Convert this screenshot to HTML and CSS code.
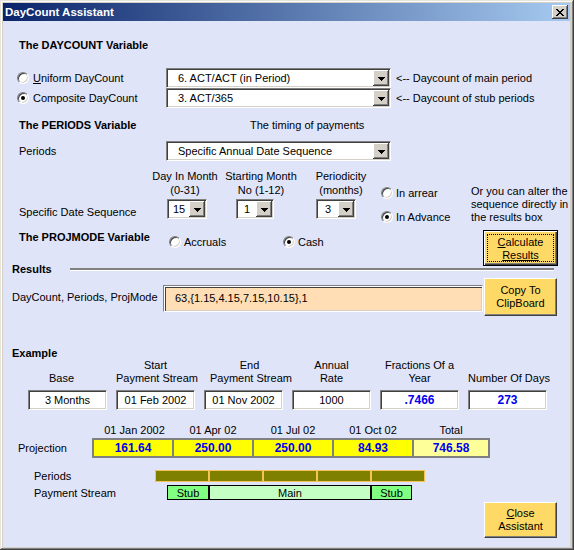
FILE: index.html
```html
<!DOCTYPE html>
<html>
<head>
<meta charset="utf-8">
<title>DayCount Assistant</title>
<link rel="stylesheet" href="styles.css">
</head>
<body>
<div class="window">
  <div class="titlebar">
    <span class="title">DayCount Assistant</span>
    <span class="close-btn"><svg width="8" height="7" viewBox="0 0 8 7" shape-rendering="crispEdges"><path d="M0 0h2v1h1v1h2v-1h1v-1h2v1h-1v1h-1v1h-1v1h1v1h1v1h1v1h-2v-1h-1v-1h-2v1h-1v1h-2v-1h1v-1h1v-1h1v-1h-1v-1h-1v-1h-1z"/></svg></span>
  </div>
  <div class="client">
    <div class="row r-h1"><span class="heading">The DAYCOUNT Variable</span></div>

    <div class="row r-dc1">
      <div class="opt opt-dc"><span class="radio"></span><span><u>U</u>niform DayCount</span></div>
      <div class="combo combo-wide"><span class="combo-text">6. ACT/ACT (in Period)</span><span class="drop"><svg width="7" height="4" viewBox="0 0 7 4" shape-rendering="crispEdges"><path d="M0 0H7V1H6V2H5V3H4V4H3V3H2V2H1V1H0Z"/></svg></span></div>
      <span class="note">&lt;-- Daycount of main period</span>
    </div>

    <div class="row r-dc2">
      <div class="opt opt-dc"><span class="radio on"></span><span>Composite DayCount</span></div>
      <div class="combo combo-wide"><span class="combo-text">3. ACT/365</span><span class="drop"><svg width="7" height="4" viewBox="0 0 7 4" shape-rendering="crispEdges"><path d="M0 0H7V1H6V2H5V3H4V4H3V3H2V2H1V1H0Z"/></svg></span></div>
      <span class="note">&lt;-- Daycount of stub periods</span>
    </div>

    <div class="row r-h2">
      <span class="heading heading-per">The PERIODS Variable</span>
      <span>The timing of payments</span>
    </div>

    <div class="row r-per">
      <span class="lbl-per">Periods</span>
      <div class="combo combo-wide"><span class="combo-text">Specific Annual Date Sequence</span><span class="drop"><svg width="7" height="4" viewBox="0 0 7 4" shape-rendering="crispEdges"><path d="M0 0H7V1H6V2H5V3H4V4H3V3H2V2H1V1H0Z"/></svg></span></div>
    </div>

    <div class="row r-seq">
      <span class="seq-label">Specific Date Sequence</span>
      <div class="param param-day">
        <span class="param-head">Day In Month<br>(0-31)</span>
        <div class="combo combo-small"><span class="combo-text combo-center">15</span><span class="drop"><svg width="7" height="4" viewBox="0 0 7 4" shape-rendering="crispEdges"><path d="M0 0H7V1H6V2H5V3H4V4H3V3H2V2H1V1H0Z"/></svg></span></div>
      </div>
      <div class="param param-month">
        <span class="param-head">Starting Month<br>No (1-12)</span>
        <div class="combo combo-small combo-narrow"><span class="combo-text combo-center">1</span><span class="drop"><svg width="7" height="4" viewBox="0 0 7 4" shape-rendering="crispEdges"><path d="M0 0H7V1H6V2H5V3H4V4H3V3H2V2H1V1H0Z"/></svg></span></div>
      </div>
      <div class="param param-freq">
        <span class="param-head">Periodicity<br>(months)</span>
        <div class="combo combo-small"><span class="combo-text combo-center">3</span><span class="drop"><svg width="7" height="4" viewBox="0 0 7 4" shape-rendering="crispEdges"><path d="M0 0H7V1H6V2H5V3H4V4H3V3H2V2H1V1H0Z"/></svg></span></div>
      </div>
      <div class="timing">
        <div class="opt"><span class="radio"></span><span>In arrear</span></div>
        <div class="opt"><span class="radio on"></span><span>In Advance</span></div>
      </div>
      <div class="hint">Or you can alter the<br>sequence directly in<br>the results box</div>
    </div>

    <div class="row r-proj">
      <span class="heading heading-proj">The PROJMODE Variable</span>
      <div class="opt opt-acc"><span class="radio"></span><span>Accruals</span></div>
      <div class="opt opt-cash"><span class="radio on"></span><span>Cash</span></div>
      <div class="btn btn-default btn-calc"><span class="focus"><span><u>C</u>alculate<br><u>Results</u></span></span></div>
    </div>

    <div class="row r-res">
      <span class="heading heading-res">Results</span>
      <span class="sep"></span>
    </div>

    <div class="row r-resbox">
      <span class="lbl-res">DayCount, Periods, ProjMode</span>
      <div class="result-box">63,{1.15,4.15,7.15,10.15},1</div>
      <div class="btn btn-copy"><span>Copy To<br>ClipBoard</span></div>
    </div>

    <div class="row r-ex"><span class="heading">Example</span></div>

    <div class="row r-exl">
      <span class="exl exl-base">Base</span>
      <span class="exl">Start<br>Payment Stream</span>
      <span class="exl exl-end">End<br>Payment Stream</span>
      <span class="exl">Annual<br>Rate</span>
      <span class="exl">Fractions Of a<br>Year</span>
      <span class="exl">Number Of Days</span>
    </div>

    <div class="row r-exb">
      <span class="field">3 Months</span>
      <span class="field">01 Feb 2002</span>
      <span class="field">01 Nov 2002</span>
      <span class="field">1000</span>
      <span class="field field-calc">.7466</span>
      <span class="field field-calc">273</span>
    </div>

    <div class="row r-dates">
      <span class="dcell dcell-first">01 Jan 2002</span>
      <span class="dcell">01 Apr 02</span>
      <span class="dcell">01 Jul 02</span>
      <span class="dcell">01 Oct 02</span>
      <span class="dcell dcell-total">Total</span>
    </div>

    <div class="row r-proj2">
      <span class="lbl-proj">Projection</span>
      <span class="pcell">161.64</span>
      <span class="pcell">250.00</span>
      <span class="pcell">250.00</span>
      <span class="pcell">84.93</span>
      <span class="pcell pcell-total">746.58</span>
    </div>

    <div class="row r-pbar">
      <span class="lbl-pbar">Periods</span>
      <span class="pseg"></span>
      <span class="pseg"></span>
      <span class="pseg"></span>
      <span class="pseg"></span>
      <span class="pseg"></span>
    </div>

    <div class="row r-stream">
      <span class="lbl-stream">Payment Stream</span>
      <span class="sseg sseg-stub1">Stub</span>
      <span class="sseg sseg-main">Main</span>
      <span class="sseg sseg-stub2">Stub</span>
    </div>

    <div class="row r-close">
      <div class="btn btn-close"><span><u>C</u>lose<br>Assistant</span></div>
    </div>
  </div>
</div>
</body>
</html>
```

FILE: styles.css
```css
html, body {
  margin: 0;
  padding: 0;
}

body {
  font-family: "Liberation Sans", Arial, sans-serif;
  font-size: 11px;
  color: #000;
  background: #fff;
}

.window {
  width: 574px;
  height: 550px;
  box-sizing: border-box;
  padding: 3px 4px 3px 3px;
  background: #D4D0C8;
  box-shadow: inset -1px -1px 0 #404040, inset 1px 1px 0 #E8E4DC, inset -2px -2px 0 #808080, inset 2px 2px 0 #fff;
  display: flex;
  flex-direction: column;
}

.titlebar {
  height: 18px;
  flex: none;
  display: flex;
  align-items: center;
  justify-content: space-between;
  padding: 0 2px;
  background: linear-gradient(to right, #0A246A, #A6CAF0);
}

.title {
  color: #fff;
  font-weight: bold;
  font-size: 11.5px;
}

.close-btn {
  width: 16px;
  height: 14px;
  box-sizing: border-box;
  background: #D4D0C8;
  box-shadow: inset -1px -1px 0 #404040, inset 1px 1px 0 #fff, inset -2px -2px 0 #808080;
  display: flex;
  align-items: center;
  justify-content: center;
}

.client {
  flex: 1;
  background: #DFE4F9;
  display: flex;
  flex-direction: column;
}

.row {
  display: flex;
  align-items: center;
  flex: none;
  box-sizing: border-box;
}

.heading {
  font-weight: bold;
  white-space: nowrap;
}

/* generic option (radio + label) */
.opt {
  display: flex;
  align-items: center;
  gap: 4px;
  flex: none;
  white-space: nowrap;
  height: 14px;
}

.radio {
  width: 12px;
  height: 12px;
  box-sizing: border-box;
  border-radius: 50%;
  background: #fff;
  border: 1px solid;
  border-color: #808080 #fff #fff #808080;
  box-shadow: inset 1px 1px 0 #404040, inset -1px -1px 0 #D4D0C8;
  display: flex;
  align-items: center;
  justify-content: center;
  flex: none;
}

.radio.on::after {
  content: "";
  width: 4px;
  height: 4px;
  border-radius: 50%;
  background: #000;
}

/* combo boxes */
.combo {
  display: flex;
  height: 20px;
  box-sizing: border-box;
  background: #fff;
  border: 1px solid;
  border-color: #808080 #fff #fff #808080;
  box-shadow: inset 1px 1px 0 #404040, inset -1px -1px 0 #D4D0C8;
  padding: 1px;
  flex: none;
}

.combo-wide {
  width: 225px;
}

.combo-small {
  width: 40px;
}

.combo-narrow {
  width: 38px;
}

.combo-text {
  flex: 1;
  line-height: 16px;
  padding-left: 10px;
  white-space: nowrap;
  overflow: hidden;
}

.combo-center {
  padding-left: 0;
  text-align: center;
}

.drop {
  width: 16px;
  height: 16px;
  box-sizing: border-box;
  background: #D4D0C8;
  box-shadow: inset -1px -1px 0 #404040, inset 1px 1px 0 #fff, inset -2px -2px 0 #808080;
  display: flex;
  align-items: center;
  justify-content: center;
  flex: none;
}

.drop svg {
  margin-top: 1px;
}

/* rows */
.r-h1 {
  margin-top: 17px;
  height: 14px;
  padding-left: 16px;
}

.r-dc1 {
  margin-top: 16px;
  height: 20px;
  padding-left: 14px;
}

.r-dc2 {
  height: 20px;
  padding-left: 14px;
}

.opt-dc {
  width: 149px;
}

.note {
  margin-left: 5px;
  white-space: nowrap;
}

.r-h2 {
  margin-top: 10px;
  height: 14px;
  padding-left: 16px;
}

.heading-per {
  width: 231px;
}

.r-per {
  margin-top: 9px;
  height: 20px;
  padding-left: 16px;
}

.lbl-per {
  width: 147px;
  flex: none;
}

.r-seq {
  margin-top: 8px;
  height: 56px;
  padding-left: 16px;
  align-items: stretch;
}

.seq-label {
  width: 129px;
  flex: none;
  align-self: flex-end;
  line-height: 14px;
  margin-bottom: 6px;
  white-space: nowrap;
}

.param {
  display: flex;
  flex-direction: column;
  align-items: flex-start;
  flex: none;
}

.param-head {
  width: 100%;
  text-align: center;
  line-height: 14px;
  white-space: nowrap;
}

.param .combo {
  margin-top: 2px;
}

.param-day {
  width: 74px;
}

.param-day .combo {
  margin-left: 19px;
}

.param-month {
  width: 78px;
}

.param-month .combo {
  margin-left: 14px;
}

.param-freq {
  width: 82px;
}

.param-freq .combo {
  margin-left: 16px;
}

.timing {
  width: 89px;
  flex: none;
  display: flex;
  flex-direction: column;
  gap: 10px;
  padding-top: 17px;
}

.timing .opt {
  gap: 3px;
  margin-left: -1px;
}

.hint {
  padding-top: 16px;
  line-height: 13px;
  white-space: nowrap;
}

.r-proj {
  margin-top: 5px;
  height: 36px;
  padding-left: 16px;
  align-items: flex-start;
}

.heading-proj {
  width: 150px;
  line-height: 14px;
  flex: none;
}

.opt-acc {
  width: 114px;
  margin-top: 5px;
  gap: 3px;
}

.opt-cash {
  width: 200px;
  margin-top: 5px;
  gap: 3px;
}

/* buttons */
.btn {
  background: #FFD966;
  box-sizing: border-box;
  display: flex;
  align-items: center;
  justify-content: center;
  text-align: center;
  line-height: 13px;
  flex: none;
  border: 1px solid;
  border-color: #fff #404040 #404040 #fff;
  box-shadow: inset -1px -1px 0 #808080;
}

.btn-default {
  border: 1px solid #000;
  box-shadow: inset 1px 1px 0 #fff, inset -1px -1px 0 #404040, inset -2px -2px 0 #808080;
  padding: 3px;
  align-items: stretch;
}

.btn-calc {
  width: 75px;
  height: 36px;
}

.focus {
  flex: 1;
  border: 1px dotted #000;
  display: flex;
  align-items: center;
  justify-content: center;
  padding-top: 1px;
}

.r-res {
  margin-top: -4px;
  height: 14px;
  padding-left: 9px;
}

.heading-res {
  width: 58px;
  flex: none;
}

.sep {
  flex: 1;
  height: 3px;
  box-sizing: border-box;
  border-top: 2px solid #808080;
  border-bottom: 1px solid #fff;
  margin-right: 16px;
}

.r-resbox {
  margin-top: 2px;
  height: 38px;
  padding-left: 9px;
}

.lbl-res {
  width: 151px;
  flex: none;
  white-space: nowrap;
}

.result-box {
  width: 320px;
  height: 27px;
  box-sizing: border-box;
  align-self: flex-start;
  margin-top: 7px;
  background: #FFDDB5;
  border: 1px solid;
  border-color: #808080 #fff #fff #808080;
  box-shadow: inset 1px 1px 0 #fff, inset 2px 2px 0 #404040, inset -1px -1px 0 #D4D0C8;
  padding-left: 11px;
  line-height: 25px;
  white-space: nowrap;
  flex: none;
}

.btn-copy {
  width: 73px;
  height: 38px;
  margin-left: 1px;
}

.r-ex {
  margin-top: 31px;
  height: 12px;
  padding-left: 9px;
}

.r-exl {
  height: 26px;
  padding-left: 25px;
  gap: 9px;
  align-items: flex-end;
}

.exl {
  width: 79px;
  flex: none;
  text-align: center;
  line-height: 13px;
  white-space: nowrap;
}

.exl-base {
  margin-left: -6px;
  margin-right: 6px;
}

.exl-end {
  margin-left: 6px;
  margin-right: -6px;
}

.r-exb {
  margin-top: 5px;
  height: 20px;
  padding-left: 25px;
  gap: 9px;
}

.field {
  width: 79px;
  height: 20px;
  box-sizing: border-box;
  background: #fff;
  border: 1px solid;
  border-color: #808080 #fff #fff #808080;
  box-shadow: inset 1px 1px 0 #404040, inset -1px -1px 0 #D4D0C8;
  display: flex;
  align-items: center;
  justify-content: center;
  white-space: nowrap;
  flex: none;
}

.field-calc {
  color: #0000F0;
  font-weight: bold;
  font-size: 12px;
}

.r-dates {
  margin-top: 13px;
  height: 14px;
  padding-left: 89px;
}

.dcell {
  width: 82px;
  flex: none;
  text-align: center;
  white-space: nowrap;
}

.dcell + .dcell {
  margin-left: -2px;
}

.dcell-first {
  padding-left: 3px;
  box-sizing: border-box;
}

.dcell-total {
  width: 78px;
}

.r-proj2 {
  margin-top: 1px;
  height: 20px;
  padding-left: 15px;
}

.lbl-proj {
  width: 74px;
  flex: none;
}

.pcell {
  width: 82px;
  height: 20px;
  box-sizing: border-box;
  border: 2px solid #808080;
  background: #FFFF00;
  color: #0000F0;
  font-weight: bold;
  font-size: 12px;
  display: flex;
  align-items: center;
  justify-content: center;
  flex: none;
}

.pcell + .pcell {
  margin-left: -2px;
}

.pcell-total {
  width: 78px;
  background: #FFFF99;
}

.r-pbar {
  margin-top: 12px;
  height: 12px;
  padding-left: 31px;
}

.lbl-pbar {
  width: 121px;
  flex: none;
}

.pseg {
  width: 54px;
  height: 12px;
  box-sizing: border-box;
  background: #808000;
  border: 1px solid #F4C45A;
  flex: none;
}

.r-stream {
  margin-top: 3px;
  height: 15px;
  padding-left: 31px;
}

.lbl-stream {
  width: 133px;
  flex: none;
  white-space: nowrap;
}

.sseg {
  height: 15px;
  box-sizing: border-box;
  border: 1px solid #000;
  display: flex;
  align-items: center;
  justify-content: center;
  flex: none;
}

.sseg-stub1 {
  width: 42px;
  background: #80FF80;
}

.sseg-main {
  width: 162px;
  background: #C4FFC4;
}

.sseg-stub2 {
  width: 41px;
  background: #80FF80;
}

.r-close {
  margin-top: 2px;
  height: 36px;
  padding-left: 481px;
}

.btn-close {
  width: 73px;
  height: 36px;
}
```
